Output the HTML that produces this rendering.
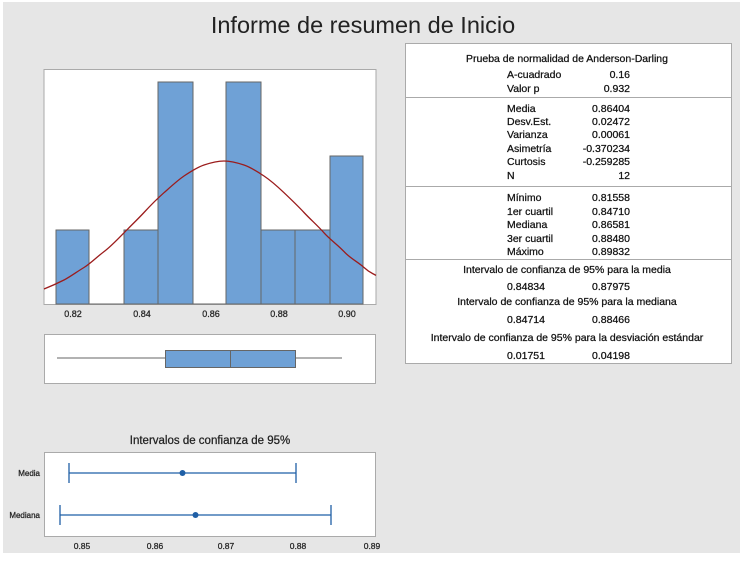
<!DOCTYPE html>
<html><head><meta charset="utf-8"><style>
html,body{margin:0;padding:0;background:#fff;}
svg{display:block;font-family:"Liberation Sans",sans-serif;}
.t text{stroke:#111;stroke-width:0.25;}
</style></head><body>
<svg width="749" height="564" viewBox="0 0 749 564" xmlns="http://www.w3.org/2000/svg">
<rect x="3" y="2" width="737" height="551" fill="#e6e6e6"/>
<text x="363" y="33" font-size="23.5" text-anchor="middle" fill="#222">Informe de resumen de Inicio</text>

<rect x="44" y="69.5" width="332" height="235" fill="#fff" stroke="#aaa"/>
<g fill="#6fa1d6" stroke="#666" stroke-width="1">
<rect x="56" y="230" width="33" height="74"/>
<rect x="124" y="230" width="34" height="74"/>
<rect x="158" y="82" width="35" height="222"/>
<rect x="226" y="82" width="35" height="222"/>
<rect x="261" y="230" width="34" height="74"/>
<rect x="295" y="230" width="35" height="74"/>
<rect x="330" y="156" width="33" height="148"/>
</g>
<line x1="89" y1="304" x2="124" y2="304" stroke="#666"/>
<line x1="193" y1="304" x2="226" y2="304" stroke="#666"/>
<path d="M44,289 C54,285 58,283 64,280 S78,271 84,267.5 S98,256 104,251.6 S118,239 124,232.8 S138,219 144,212.5 S158,198 164,192.7 S178,180 184,176 S198,167 204,165 S218,161 224,161 S238,163 244,165 S258,172 264,176 S278,187 284,192.7 S298,206 304,212.5 S318,226 324,232.8 S338,245 344,251.6 S358,262 364,267.5 S372,273 376,275.4" fill="none" stroke="#9b1c1c" stroke-width="1.3"/>
<g font-size="9" fill="#333" text-anchor="middle" class="t">
<text x="73" y="317">0.82</text><text x="142" y="317">0.84</text><text x="211" y="317">0.86</text><text x="279" y="317">0.88</text><text x="347" y="317">0.90</text>
</g>

<rect x="44.5" y="334.5" width="331" height="49" fill="#fff" stroke="#aaa"/>
<line x1="57" y1="358" x2="342" y2="358" stroke="#666"/>
<rect x="165.5" y="350.5" width="130" height="17" fill="#6fa1d6" stroke="#666"/>
<line x1="230.5" y1="350" x2="230.5" y2="368" stroke="#666"/>

<text x="210" y="444" font-size="11.5" text-anchor="middle" fill="#222" stroke="#222" stroke-width="0.25">Intervalos de confianza de 95%</text>
<rect x="44.5" y="452.5" width="331" height="84" fill="#fff" stroke="#aaa"/>
<g stroke="#1f5fa6" stroke-width="1.3">
<line x1="69" y1="473" x2="296" y2="473"/><line x1="69" y1="463" x2="69" y2="483"/><line x1="296" y1="463" x2="296" y2="483"/>
<line x1="60" y1="515" x2="331" y2="515"/><line x1="60" y1="505" x2="60" y2="525"/><line x1="331" y1="505" x2="331" y2="525"/>
</g>
<circle cx="182.5" cy="473" r="3" fill="#1f5fa6"/>
<circle cx="195.5" cy="515" r="3" fill="#1f5fa6"/>
<g font-size="8" fill="#333" text-anchor="end" class="t">
<text x="40" y="476">Media</text><text x="40" y="518">Mediana</text>
</g>
<g font-size="8.5" fill="#333" text-anchor="middle" class="t">
<text x="82" y="549">0.85</text><text x="155" y="549">0.86</text><text x="226" y="549">0.87</text><text x="298" y="549">0.88</text><text x="372" y="549">0.89</text>
</g>

<rect x="405.5" y="43.5" width="326" height="320" fill="#fff" stroke="#aaa"/>
<g stroke="#aaa"><line x1="406" y1="97.5" x2="731" y2="97.5"/><line x1="406" y1="186.5" x2="731" y2="186.5"/><line x1="406" y1="259.5" x2="731" y2="259.5"/></g>
<g font-size="10.5" fill="#111" class="t">
<text x="567" y="62" text-anchor="middle">Prueba de normalidad de Anderson-Darling</text>
<g><text x="507" y="78">A-cuadrado</text><text x="507" y="92">Valor p</text>
<text x="507" y="112">Media</text><text x="507" y="125">Desv.Est.</text><text x="507" y="138">Varianza</text><text x="507" y="152">Asimetría</text><text x="507" y="165">Curtosis</text><text x="507" y="179">N</text>
<text x="507" y="201">Mínimo</text><text x="507" y="215">1er cuartil</text><text x="507" y="228">Mediana</text><text x="507" y="242">3er cuartil</text><text x="507" y="255">Máximo</text></g>
<g text-anchor="end"><text x="630" y="78">0.16</text><text x="630" y="92">0.932</text>
<text x="630" y="112">0.86404</text><text x="630" y="125">0.02472</text><text x="630" y="138">0.00061</text><text x="630" y="152">-0.370234</text><text x="630" y="165">-0.259285</text><text x="630" y="179">12</text>
<text x="630" y="201">0.81558</text><text x="630" y="215">0.84710</text><text x="630" y="228">0.86581</text><text x="630" y="242">0.88480</text><text x="630" y="255">0.89832</text></g>
<g text-anchor="middle">
<text x="567" y="273">Intervalo de confianza de 95% para la media</text>
<text x="567" y="305">Intervalo de confianza de 95% para la mediana</text>
<text x="567" y="341">Intervalo de confianza de 95% para la desviación estándar</text>
</g>
<g text-anchor="end">
<text x="545" y="290">0.84834</text><text x="630" y="290">0.87975</text>
<text x="545" y="323">0.84714</text><text x="630" y="323">0.88466</text>
<text x="545" y="359">0.01751</text><text x="630" y="359">0.04198</text>
</g>
</g>
</svg>
</body></html>
